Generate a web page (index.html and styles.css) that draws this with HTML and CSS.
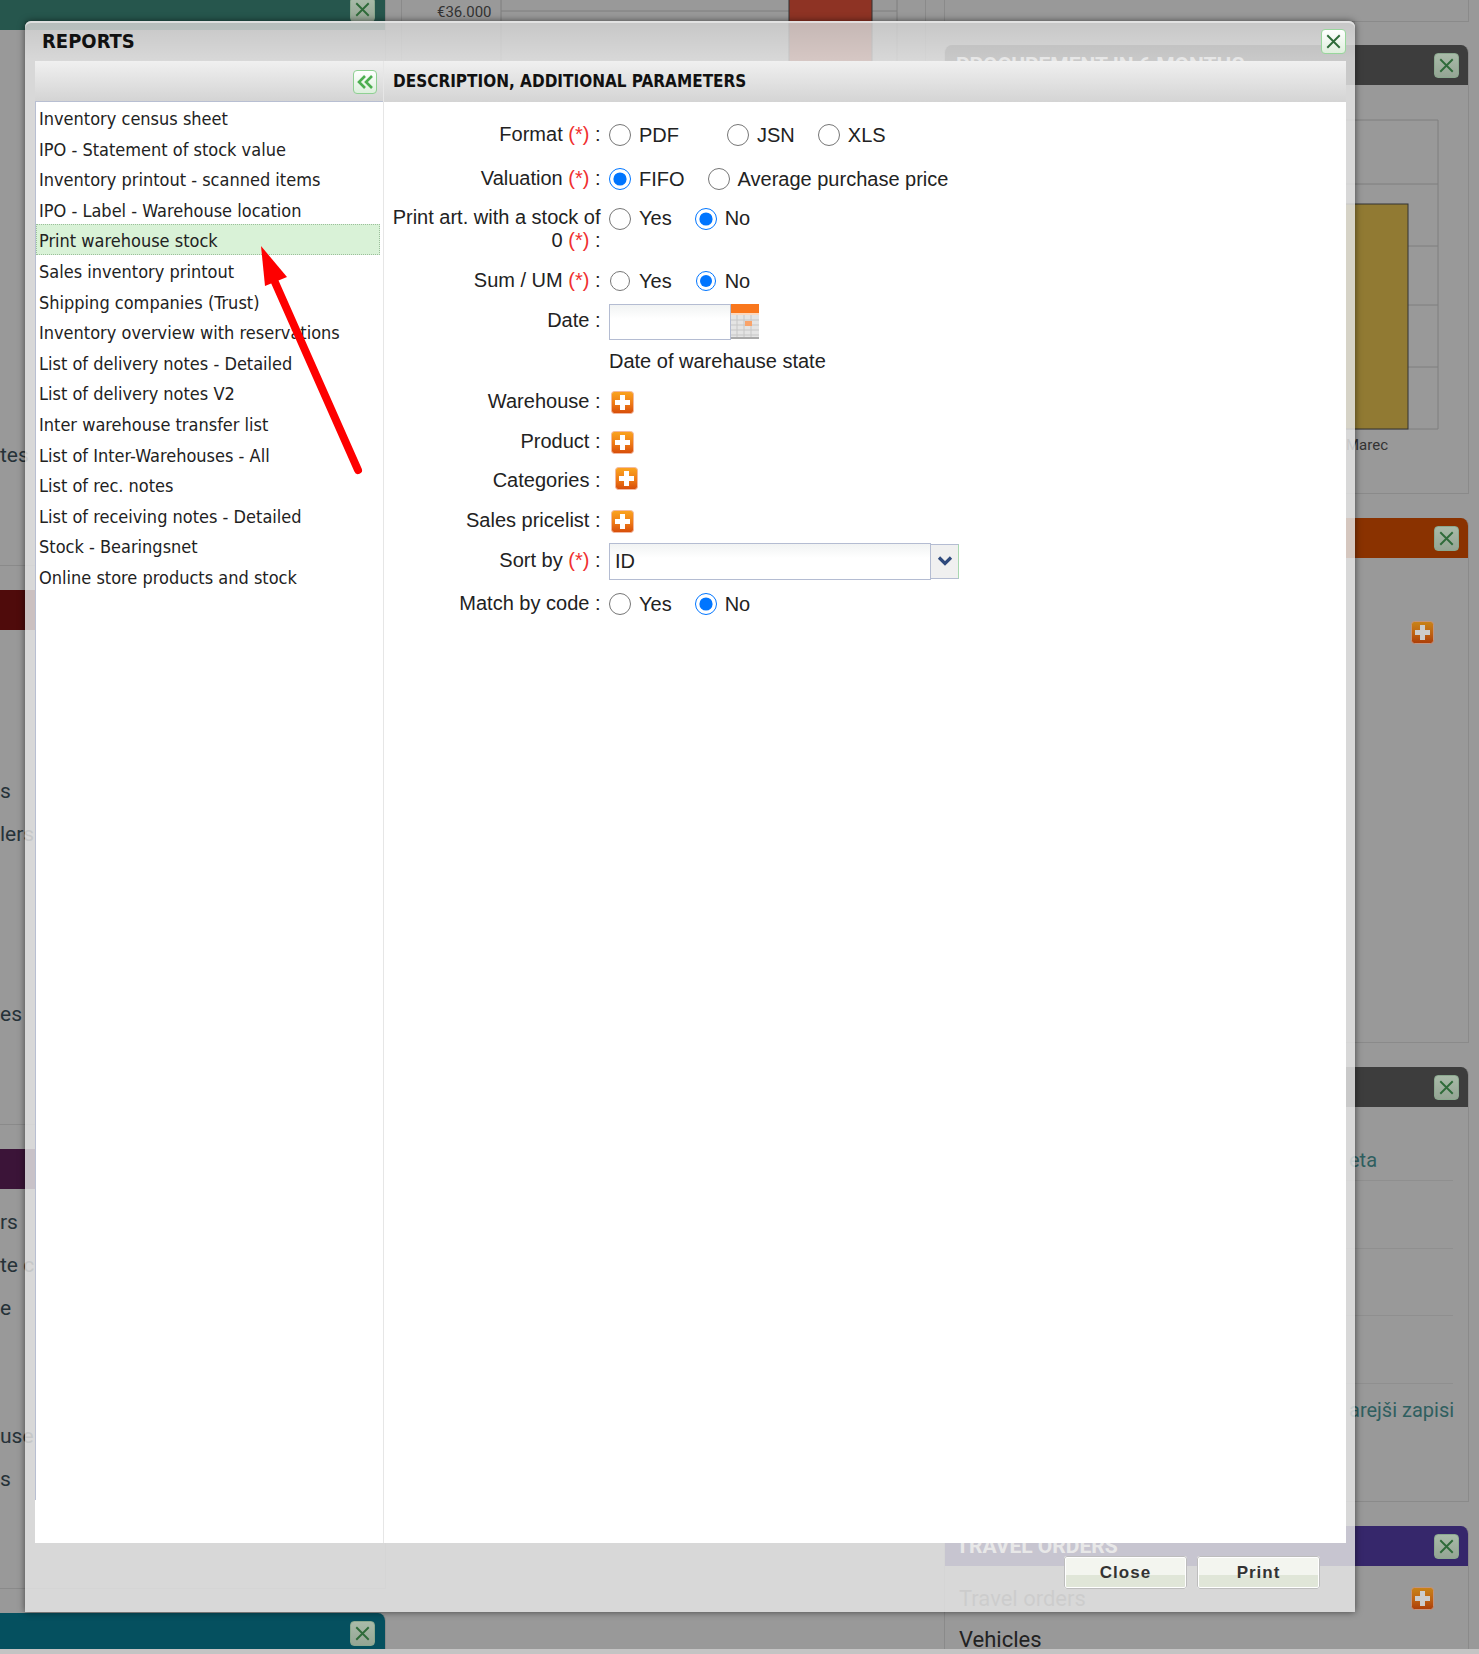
FILE: index.html
```html
<!DOCTYPE html>
<html>
<head>
    <meta charset="utf-8">
    <title>Reports</title>
    <link rel="stylesheet" href="styles.css">
</head>
<body>
    <svg class="defs" width="0" height="0">
        <defs>
            <linearGradient id="plus-fill" x1="0" y1="0" x2="0" y2="1">
                <stop offset="0" stop-color="#fba51f"/>
                <stop offset="0.55" stop-color="#ee7a16"/>
                <stop offset="1" stop-color="#d64c0a"/>
            </linearGradient>
            <symbol id="plus" viewBox="0 0 23 23">
                <rect x="0.5" y="0.5" width="22" height="22" rx="3" fill="url(#plus-fill)" stroke="#f3b9a0"/>
                <path d="M9 4h5v5h5v5h-5v5H9v-5H4V9h5z" fill="#fff"/>
            </symbol>
            <symbol id="cross" viewBox="0 0 24 24">
                <path d="M5.5 5.5l13 13M18.5 5.5l-13 13" stroke="#2f6b3a" stroke-width="2" fill="none"/>
            </symbol>
        </defs>
    </svg>

    <div class="dash">
        <div class="col">
            <div class="card first">
                <div class="card-head green"><span class="close"><svg><use href="#cross"/></svg></span></div>
                <div class="peek peek-a">
                    <div class="peek-row">tes</div>
                </div>
            </div>
            <div class="card h-535">
                <div class="card-head maroon"><span class="close"><svg><use href="#cross"/></svg></span></div>
                <div class="peek peek-b">
                    <div class="peek-row">s</div>
                    <div class="peek-row">lers</div>
                    <div class="peek-row skip-3">es</div>
                </div>
            </div>
            <div class="card h-440">
                <div class="card-head plum"><span class="close"><svg><use href="#cross"/></svg></span></div>
                <div class="peek peek-c">
                    <div class="peek-row">rs</div>
                    <div class="peek-row">te c</div>
                    <div class="peek-row">e</div>
                    <div class="peek-row skip-2">use</div>
                    <div class="peek-row">s</div>
                </div>
            </div>
            <div class="card h-37">
                <div class="card-head teal"><span class="close"><svg><use href="#cross"/></svg></span></div>
            </div>
        </div>

        <div class="col col-mid">
            <div class="card chart-card">
                <svg class="chart" width="524" height="480">
                    <text x="35" y="17" class="tick">€36.000</text>
                    <path d="M99 0V480M495 0V480M99 11H495" stroke="#7f7f7f" fill="none"/>
                    <rect x="387" y="-2" width="83" height="200" fill="#8e3324" stroke="#333"/>
                </svg>
            </div>
        </div>

        <div class="col">
            <div class="card stub"></div>
            <div class="card h-449">
                <div class="card-head slate">
                    <span class="card-title">PROCUREMENT IN 6 MONTHS</span>
                    <span class="close"><svg><use href="#cross"/></svg></span>
                </div>
                <svg class="chart" width="523" height="400">
                    <path d="M56 35H493V344H56zM56 99H493M56 161H493M56 220H493M56 282H493" stroke="#7f7f7f" fill="none"/>
                    <rect x="340" y="119" width="123" height="225" fill="#917a33" stroke="#333"/>
                    <text x="401" y="365" class="tick">Marec</text>
                </svg>
            </div>
            <div class="card h-525">
                <div class="card-head rust"><span class="close"><svg><use href="#cross"/></svg></span></div>
                <div class="card-add"><svg class="plus"><use href="#plus"/></svg></div>
            </div>
            <div class="card h-435">
                <div class="card-head slate"><span class="close"><svg><use href="#cross"/></svg></span></div>
                <div class="link-row"><span class="link-text">eta</span></div>
                <div class="link-row"></div>
                <div class="link-row"></div>
                <div class="link-row"></div>
                <div class="link-row last"><span class="link-text">arejši zapisi</span></div>
            </div>
            <div class="card h-124">
                <div class="card-head indigo">
                    <span class="card-title">TRAVEL ORDERS</span>
                    <span class="close"><svg><use href="#cross"/></svg></span>
                </div>
                <div class="travel-row">
                    <span class="travel-link">Travel orders</span>
                    <svg class="plus"><use href="#plus"/></svg>
                </div>
                <div class="travel-row"><span>Vehicles</span></div>
            </div>
        </div>
    </div>

    <div class="modal">
        <div class="modal-title">
            <span>REPORTS</span>
            <span class="close bright"><svg><use href="#cross"/></svg></span>
        </div>
        <div class="modal-body">
            <div class="side">
                <div class="panel-head">
                    <span class="collapse">
                        <svg width="17" height="14" viewBox="0 0 17 14"><path d="M8 1L2 7l6 6M15 1L9 7l6 6" stroke="#4cae50" stroke-width="2.6" fill="none"/></svg>
                    </span>
                </div>
                <ul class="report-list">
                    <li>Inventory census sheet</li>
                    <li>IPO - Statement of stock value</li>
                    <li>Inventory printout - scanned items</li>
                    <li>IPO - Label - Warehouse location</li>
                    <li class="selected">Print warehouse stock</li>
                    <li>Sales inventory printout</li>
                    <li>Shipping companies (Trust)</li>
                    <li>Inventory overview with reservations</li>
                    <li>List of delivery notes - Detailed</li>
                    <li>List of delivery notes V2</li>
                    <li>Inter warehouse transfer list</li>
                    <li>List of Inter-Warehouses - All</li>
                    <li>List of rec. notes</li>
                    <li>List of receiving notes - Detailed</li>
                    <li>Stock - Bearingsnet</li>
                    <li>Online store products and stock</li>
                </ul>
            </div>
            <div class="main">
                <div class="panel-head main-head">DESCRIPTION, ADDITIONAL PARAMETERS</div>
                <div class="form">
                    <div class="lbl">Format <span class="req">(*)</span> :</div>
                    <div class="field">
                        <label class="opt wide"><input type="radio" name="format">PDF</label>
                        <label class="opt"><input type="radio" name="format">JSN</label>
                        <label class="opt"><input type="radio" name="format">XLS</label>
                    </div>

                    <div class="lbl">Valuation <span class="req">(*)</span> :</div>
                    <div class="field">
                        <label class="opt"><input type="radio" name="valuation" checked>FIFO</label>
                        <label class="opt"><input type="radio" name="valuation">Average purchase price</label>
                    </div>

                    <div class="lbl top">Print art. with a stock of 0 <span class="req">(*)</span> :</div>
                    <div class="field top">
                        <label class="opt"><input type="radio" name="zero">Yes</label>
                        <label class="opt"><input type="radio" name="zero" checked>No</label>
                    </div>

                    <div class="lbl">Sum / UM <span class="req">(*)</span> :</div>
                    <div class="field small">
                        <label class="opt"><input type="radio" name="sum">Yes</label>
                        <label class="opt"><input type="radio" name="sum" checked>No</label>
                    </div>

                    <div class="lbl">Date :</div>
                    <div class="field tight">
                        <input class="date-input" type="text">
                        <svg class="cal" width="28" height="35" viewBox="0 0 28 35">
                            <rect width="28" height="35" fill="#e4e4e4"/>
                            <rect width="28" height="9" fill="#f9771d"/>
                            <rect y="9" width="28" height="2" fill="#fbd9c0"/>
                            <path d="M0 16H28M0 21H28M0 26H28M0 31H28M6 11V33M13 11V33M20 11V33" stroke="#c6c6c6"/>
                            <rect x="14" y="17" width="7" height="5" fill="#f9a36a"/>
                            <rect y="33" width="28" height="2" fill="#a9a9a9"/>
                        </svg>
                    </div>

                    <div></div>
                    <div class="field">Date of warehause state</div>

                    <div class="lbl">Warehouse :</div>
                    <div class="field"><svg class="plus add"><use href="#plus"/></svg></div>

                    <div class="lbl">Product :</div>
                    <div class="field"><svg class="plus add"><use href="#plus"/></svg></div>

                    <div class="lbl low">Categories :</div>
                    <div class="field"><svg class="plus add shifted"><use href="#plus"/></svg></div>

                    <div class="lbl low">Sales pricelist :</div>
                    <div class="field"><svg class="plus add lower"><use href="#plus"/></svg></div>

                    <div class="lbl">Sort by <span class="req">(*)</span> :</div>
                    <div class="field tight">
                        <div class="combo">ID</div>
                        <div class="combo-btn">
                            <svg width="16" height="10" viewBox="0 0 16 10"><path d="M2 1.5l6 6 6-6" stroke="#2f4a7d" stroke-width="3.2" fill="none"/></svg>
                        </div>
                    </div>

                    <div class="lbl">Match by code :</div>
                    <div class="field">
                        <label class="opt"><input type="radio" name="match">Yes</label>
                        <label class="opt"><input type="radio" name="match" checked>No</label>
                    </div>
                </div>
            </div>
        </div>
        <div class="modal-foot">
            <button class="btn">Close</button>
            <button class="btn">Print</button>
        </div>
    </div>

    <svg class="arrow" width="130" height="240" viewBox="250 240 130 240">
        <path d="M274 280L358 470" stroke="#fe0000" stroke-width="8" stroke-linecap="round"/>
        <polygon points="261,246 265,286 287,277" fill="#fe0000"/>
    </svg>
</body>
</html>
```

FILE: styles.css
```css
html, body {
    margin: 0;
    padding: 0;
}
body {
    width: 1479px;
    height: 1654px;
    overflow: hidden;
    position: relative;
    background: #c4c4c4;
    font-family: "Liberation Sans", Arial, sans-serif;
    color: #222;
}
.defs {
    position: absolute;
}

/* dashboard under the mask */
.dash {
    display: grid;
    grid-template-columns: 386px 558px 525px;
    height: 1649px;
    overflow: hidden;
    background: #999;
}
.col {
    display: flex;
    flex-direction: column;
    gap: 24px;
}
.col-mid {
    padding: 0 18px 0 15px;
}
.card {
    flex: none;
    box-sizing: border-box;
    border: 1px solid #8a8a8a;
    border-top: 0;
    border-radius: 8px 8px 0 0;
    overflow: hidden;
}
.col:first-child .card {
    border-left: 0;
    border-radius: 0 8px 0 0;
}
.first {
    margin-top: -12px;
    height: 578px;
}
.first .card-head {
    height: 42px;
}
.stub {
    height: 22px;
    border-radius: 0;
    margin-bottom: -1px;
}
.chart-card {
    height: 494px;
    border-top: 0;
    border-radius: 0;
}
.h-535 { height: 535px; }
.h-440 { height: 440px; }
.h-37 { height: 37px; border-bottom: 0; }
.h-449 { height: 449px; }
.h-525 { height: 525px; }
.h-435 { height: 435px; }
.h-124 { height: 130px; }

.card-head {
    height: 40px;
    display: flex;
    align-items: center;
    justify-content: flex-end;
    padding: 0 9px 0 11px;
}
.col:first-child .card-head {
    padding-right: 10px;
}
.green { background: #26564d; }
.maroon { background: #4f0b0b; }
.plum { background: #3b1438; }
.teal { background: #05505f; }
.slate { background: #3d3d3d; }
.rust { background: #8a3200; }
.indigo { background: #36276b; }
.card-title {
    margin-right: auto;
    color: #fff;
    font-weight: bold;
    font-size: 21px;
    white-space: nowrap;
    font-family: Roboto, sans-serif;
}
.close {
    flex: none;
    box-sizing: border-box;
    width: 25px;
    height: 25px;
    border: 1px solid #8aa88e;
    border-radius: 4px;
    background: linear-gradient(#a9bba9, #94a594);
}
.close svg {
    display: block;
    width: 23px;
    height: 23px;
}
.close.bright {
    border: 1px solid #98d69c;
    background: linear-gradient(#fff, #dfeedd);
}
.plus {
    display: block;
    width: 23px;
    height: 23px;
}
.card .plus {
    filter: brightness(0.8);
}
.chart {
    display: block;
}
.tick {
    font-family: Roboto, sans-serif;
    font-size: 15px;
    fill: #333;
}

.peek {
    font-family: Roboto, sans-serif;
    font-size: 21px;
    color: #263238;
}
.peek-a { padding-top: 404px; }
.peek-b { padding-top: 140px; }
.peek-c { padding-top: 12px; }
.peek-row {
    height: 43px;
    line-height: 43px;
    white-space: nowrap;
}
.skip-2 { margin-top: 85px; }
.skip-3 { margin-top: 137px; }

.card-add {
    display: flex;
    justify-content: flex-end;
    padding: 63px 34px 0 0;
}
.link-row {
    box-sizing: border-box;
    height: 67.5px;
    margin: 0 15px 0 0;
    padding-left: 404px;
    border-bottom: 1px solid #8f8f8f;
    font-family: Roboto, sans-serif;
    font-size: 20px;
    color: #2f5f60;
    display: flex;
    align-items: flex-end;
    padding-bottom: 8px;
    white-space: nowrap;
}
.link-row:nth-child(2) {
    height: 74px;
}
.link-row.last {
    height: 46px;
    border-bottom: 0;
}
.travel-row {
    display: flex;
    align-items: center;
    justify-content: space-between;
    height: 41px;
    padding: 0 34px 0 14px;
    font-family: Roboto, sans-serif;
    font-size: 22px;
    color: #222;
}
.travel-row:nth-child(2) {
    margin-top: 12px;
}
.travel-link {
    color: #555;
}

/* dialog */
.modal {
    position: absolute;
    left: 25px;
    top: 21px;
    width: 1330px;
    height: 1591px;
    display: flex;
    flex-direction: column;
    background: rgba(228, 228, 228, 0.84);
    border-radius: 6px 6px 0 0;
    box-shadow: 0 0 7px rgba(0, 0, 0, 0.55), inset 0 2px 0 rgba(255, 255, 255, 0.75);
}
.modal-title {
    flex: none;
    height: 40px;
    display: flex;
    align-items: center;
    justify-content: space-between;
    padding: 0 9px 0 17px;
    font-family: "DejaVu Sans Condensed", "DejaVu Sans", sans-serif;
    font-weight: bold;
    font-size: 20px;
    color: #111;
    background: linear-gradient(rgba(0, 0, 0, 0.08) 5%, rgba(0, 0, 0, 0));
}
.modal-body {
    flex: none;
    height: 1482px;
    margin: 0 9px 0 10px;
    display: flex;
    background: #fff;
}
.side {
    flex: none;
    width: 349px;
    box-sizing: border-box;
    border-right: 1px solid #e6e6e6;
}
.panel-head {
    box-sizing: border-box;
    height: 41px;
    background: linear-gradient(#f0f0f0, #d4d4d4);
}
.side .panel-head {
    display: flex;
    justify-content: flex-end;
    padding: 9px 6px 0 0;
    border-bottom: 1px solid #b8bfd2;
}
.collapse {
    box-sizing: border-box;
    width: 24px;
    height: 24px;
    display: flex;
    align-items: center;
    justify-content: center;
    border: 1px solid #8fd093;
    border-radius: 4px;
    background: linear-gradient(#fff, #dcefdc);
}
.report-list {
    list-style: none;
    margin: 0;
    padding: 0;
    height: 1398px;
    border-left: 1px solid #b8bfd2;
    font-family: "DejaVu Sans Condensed", "DejaVu Sans", sans-serif;
    font-size: 18px;
    color: #222;
}
.report-list li {
    box-sizing: border-box;
    height: 30.6px;
    line-height: 33px;
    padding-left: 3px;
    margin-right: 3px;
    white-space: nowrap;
}
.report-list .selected {
    background: #d9f2d7;
    border: 1px dotted #9bbf9b;
    padding-left: 2px;
    line-height: 31px;
}
.main {
    flex: 1;
}
.main-head {
    padding-left: 9px;
    line-height: 41px;
    font-family: "DejaVu Sans Condensed", "DejaVu Sans", sans-serif;
    font-weight: bold;
    font-size: 17px;
    color: #111;
}
.form {
    display: grid;
    grid-template-columns: 209px 1fr;
    grid-template-rows: 42px 46px 59px 40px 41px 38px 44px 37px 35px 45px 40px 46px;
    column-gap: 8.5px;
    align-items: center;
    padding: 12px 0 0 7.5px;
    font-size: 20px;
    color: #222;
}
.lbl {
    text-align: right;
    line-height: 23px;
    margin-bottom: 2px;
}
.lbl.low {
    margin: 3px 0 0;
}
.lbl.top, .field.top {
    align-self: start;
}
.lbl.top {
    padding-top: 4px;
    margin-bottom: 0;
}
.field.top {
    padding-top: 5px;
}
.req {
    color: #f03030;
}
.field {
    display: flex;
    align-items: center;
    gap: 23px;
}
.field.tight {
    gap: 0;
}
.opt {
    display: flex;
    align-items: center;
    gap: 8px;
}
.opt input {
    width: 22px;
    height: 22px;
    margin: 0;
}
.small .opt input {
    width: 20px;
    height: 20px;
    margin: 0 1px;
}
.wide {
    margin-right: 25px;
}
.add {
    margin-left: 2px;
}
.add.shifted {
    margin-left: 6px;
}
.add.lower {
    margin-top: 6px;
}
.date-input {
    box-sizing: border-box;
    width: 122px;
    height: 36px;
    border: 1px solid #b4bcd2;
    background: linear-gradient(#f1f3f3, #fff 40%);
    padding: 0;
}
.cal {
    display: block;
    margin-bottom: 1px;
}
.combo {
    box-sizing: border-box;
    width: 322px;
    height: 37px;
    line-height: 35px;
    padding-left: 5px;
    border: 1px solid #b4bcd2;
    background: linear-gradient(#f1f3f3, #fff 40%);
}
.combo-btn {
    box-sizing: border-box;
    width: 28px;
    height: 35px;
    display: flex;
    align-items: center;
    justify-content: center;
    background: #f0f0f0;
    border: 1px solid #b4bcd2;
    border-left: 0;
    border-right-color: #a8d8b0;
}
.modal-foot {
    flex: none;
    display: flex;
    justify-content: flex-end;
    gap: 10px;
    padding: 13px 35px 0 0;
}
.btn {
    box-sizing: border-box;
    width: 123px;
    height: 33px;
    padding: 0;
    border: 2px solid #fff;
    outline: 1px solid #bdbdbd;
    outline-offset: -1px;
    border-radius: 3px;
    background: linear-gradient(#f3f5ef 60%, #e0e6d8 60%);
    font-family: "Liberation Sans", Arial, sans-serif;
    font-weight: bold;
    font-size: 17px;
    letter-spacing: 1px;
    color: #333;
}

/* annotation on top of the screenshot */
.arrow {
    position: absolute;
    left: 250px;
    top: 240px;
}
```
